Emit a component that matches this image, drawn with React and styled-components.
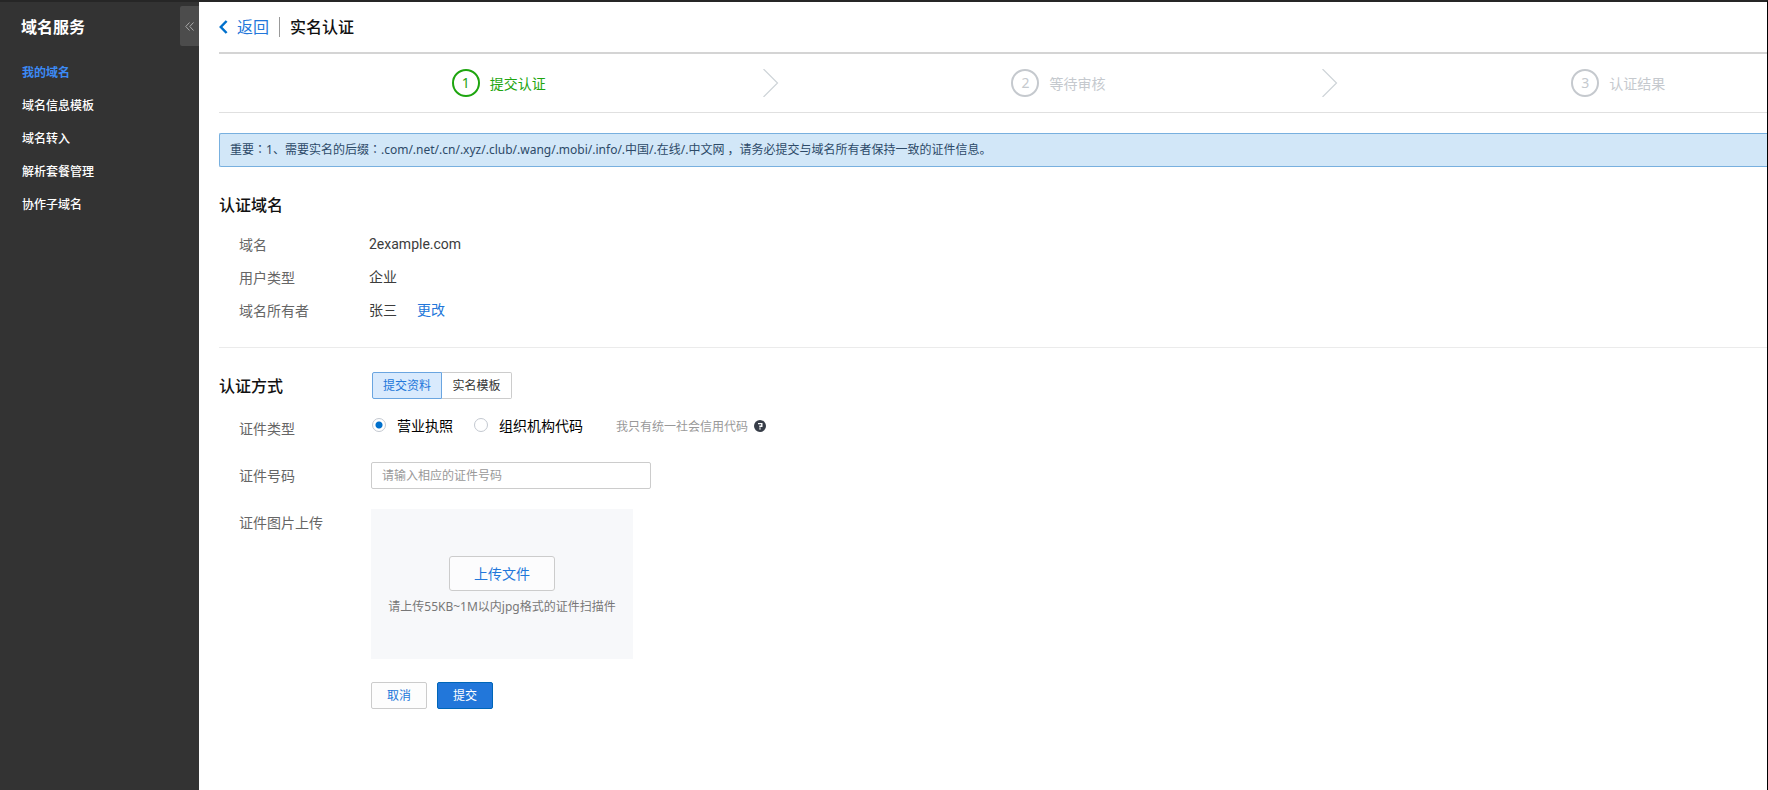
import React, { useState } from "react";
import styled, { createGlobalStyle, css } from "styled-components";

const menu = ["我的域名", "域名信息模板", "域名转入", "解析套餐管理", "协作子域名"];
const steps = ["提交认证", "等待审核", "认证结果"];
const modes = ["提交资料", "实名模板"];
const certTypes = ["营业执照", "组织机构代码"];

function App() {
  const [mode, setMode] = useState(modes[0]);
  const [certType, setCertType] = useState(certTypes[0]);

  return (
    <>
      <GlobalStyle />
      <Page>
        <Sidebar>
          <SidebarHead>
            <SidebarTitle>域名服务</SidebarTitle>
            <Collapse type="button" aria-label="收起">
              <svg width="9" height="9" viewBox="0 0 9 9">
                <path d="M4.5 0.5L0.8 4.5L4.5 8.5M8.5 0.5L4.8 4.5L8.5 8.5" />
              </svg>
            </Collapse>
          </SidebarHead>
          <nav>
            {menu.map((item, i) => (
              <MenuLink href="#" key={item} $active={i === 0}>
                {item}
              </MenuLink>
            ))}
          </nav>
        </Sidebar>

        <Main>
          <Header>
            <Back href="#">
              <svg width="9" height="14" viewBox="0 0 9 14">
                <path d="M7.6 1L1.8 7L7.6 13" />
              </svg>
              返回
            </Back>
            <PageTitle>实名认证</PageTitle>
          </Header>

          <Steps>
            {steps.map((step, i) => (
              <Step key={step} $active={i === 0}>
                <StepNumber>{i + 1}</StepNumber>
                {step}
                {i < steps.length - 1 && (
                  <StepArrow width="16" height="28" viewBox="0 0 16 28">
                    <path d="M0.5 0L14.5 14L0.5 28" />
                  </StepArrow>
                )}
              </Step>
            ))}
          </Steps>

          <Notice>
            重要<Mark>：</Mark>1、需要实名的后缀<Mark>：</Mark>
            .com/.net/.cn/.xyz/.club/.wang/.mobi/.info/.中国/.在线/.中文网
            ，请务必提交与域名所有者保持一致的证件信息。
          </Notice>

          <Section>
            <SectionTitle>认证域名</SectionTitle>
            <Details>
              <dt>域名</dt>
              <dd>2example.com</dd>
              <dt>用户类型</dt>
              <dd>企业</dd>
              <dt>域名所有者</dt>
              <dd>
                张三
                <TextLink href="#">更改</TextLink>
              </dd>
            </Details>
          </Section>

          <Form onSubmit={(e) => e.preventDefault()}>
            <FormHead>
              <SectionTitle>认证方式</SectionTitle>
              <Toggle>
                {modes.map((item) => (
                  <ToggleButton
                    type="button"
                    key={item}
                    $active={mode === item}
                    onClick={() => setMode(item)}
                  >
                    {item}
                  </ToggleButton>
                ))}
              </Toggle>
            </FormHead>

            <FormRow>
              <FormLabel as="span" id="certType">
                证件类型
              </FormLabel>
              <Radios role="radiogroup" aria-labelledby="certType">
                {certTypes.map((item) => (
                  <RadioLabel key={item}>
                    <Radio
                      type="radio"
                      name="certType"
                      checked={certType === item}
                      onChange={() => setCertType(item)}
                    />
                    {item}
                  </RadioLabel>
                ))}
                <Tip>
                  我只有统一社会信用代码
                  <svg width="12" height="12" viewBox="0 0 12 12">
                    <circle cx="6" cy="6" r="6" fill="#373d48" />
                    <path
                      d="M4 3.6H7.8V6.2H6V7.6M6 8.3V9.6"
                      fill="none"
                      stroke="#fff"
                      strokeWidth="1.4"
                    />
                  </svg>
                </Tip>
              </Radios>
            </FormRow>

            <FormRow>
              <FormLabel htmlFor="certNumber">证件号码</FormLabel>
              <TextInput id="certNumber" type="text" placeholder="请输入相应的证件号码" />
            </FormRow>

            <FormRow>
              <FormLabel as="span">证件图片上传</FormLabel>
              <UploadBox>
                <UploadButton type="button">上传文件</UploadButton>
                <UploadHint>请上传55KB~1M以内jpg格式的证件扫描件</UploadHint>
              </UploadBox>
            </FormRow>

            <Actions>
              <ActionButton type="button">取消</ActionButton>
              <ActionButton type="submit" $primary>
                提交
              </ActionButton>
            </Actions>
          </Form>
        </Main>
      </Page>
    </>
  );
}

export default App;

const GlobalStyle = createGlobalStyle`
  * {
    box-sizing: border-box;
  }
  body {
    margin: 0;
    background: #fff;
    color: #333;
    font-family: "Noto Sans", "Noto Sans CJK SC", sans-serif;
    font-size: 14px;
  }
  a {
    text-decoration: none;
  }
  button, input {
    font-family: inherit;
  }
  button {
    cursor: pointer;
    padding: 0;
  }
`;

const Page = styled.div`
  display: flex;
  min-height: 100vh;
  border-top: 2px solid #262626;
  border-right: 1px solid #000;
`;

const Sidebar = styled.aside`
  flex: 0 0 199px;
  background: #333;
`;

const SidebarHead = styled.div`
  display: flex;
  justify-content: space-between;
  align-items: flex-end;
  height: 44px;
  margin-bottom: 10px;
  padding-left: 21px;
`;

const SidebarTitle = styled.h1`
  margin: 0;
  color: #fff;
  font-size: 16px;
  line-height: 38px;
`;

const Collapse = styled.button`
  display: flex;
  align-items: center;
  justify-content: center;
  width: 19px;
  height: 40px;
  border: 0;
  border-radius: 2px 0 0 2px;
  background: #4c4c4c;

  path {
    fill: none;
    stroke: #aaa;
  }
`;

const MenuLink = styled.a`
  display: block;
  padding-left: 22px;
  color: ${(props) => (props.$active ? "#3c8af5" : "#fff")};
  font-size: 12px;
  font-weight: ${(props) => (props.$active ? 700 : 500)};
  line-height: 33px;
`;

const Main = styled.main`
  flex: 1;
  min-width: 0;
  padding-left: 20px;
  overflow: hidden;
`;

const Header = styled.header`
  display: flex;
  align-items: center;
  height: 52px;
  border-bottom: 2px solid #d4d4d4;
  font-size: 16px;
`;

const Back = styled.a`
  display: flex;
  align-items: center;
  gap: 9px;
  color: #2277da;
  line-height: 20px;

  path {
    fill: none;
    stroke: #0070cc;
    stroke-width: 2.5;
  }
`;

const PageTitle = styled.h2`
  margin: 0 0 0 10px;
  padding-left: 10px;
  border-left: 1px solid #999;
  color: #111;
  font-size: 16px;
  font-weight: 500;
  line-height: 20px;
`;

/* wider than the page, the last step runs past the edge */
const Steps = styled.div`
  display: grid;
  grid-template-columns: repeat(3, 1fr);
  width: calc(100% + 131px);
  height: 59px;
  border-bottom: 1px solid #e0e0e0;
`;

const Step = styled.div`
  position: relative;
  display: flex;
  align-items: center;
  justify-content: center;
  gap: 10px;
  color: ${(props) => (props.$active ? "#1ea50f" : "#c5c9ce")};
`;

const StepNumber = styled.span`
  width: 28px;
  height: 28px;
  border: 2px solid;
  border-radius: 50%;
  line-height: 24px;
  text-align: center;
`;

const StepArrow = styled.svg`
  position: absolute;
  right: 0;
  fill: none;
  stroke: #ced4d8;
  stroke-width: 1.2;
`;

const Notice = styled.p`
  margin: 20px 0 0;
  padding-left: 10px;
  border: 1px solid #78b0df;
  border-right: 0;
  border-radius: 2px 0 0 2px;
  background: #d2e7f8;
  color: #2d4a68;
  font-size: 12px;
  line-height: 32px;
`;

/* colon centred in its cell */
const Mark = styled.span`
  font-family: "Noto Sans CJK TC", sans-serif;
  line-height: 1;
`;

const Section = styled.section`
  padding: 26px 0 20px;
  border-bottom: 1px solid #ebebeb;
`;

const SectionTitle = styled.h3`
  margin: 0;
  color: #111;
  font-size: 16px;
  font-weight: 500;
  line-height: 24px;
`;

const Details = styled.dl`
  display: grid;
  grid-template-columns: 130px 1fr;
  margin: 11px 0 0;
  padding-left: 20px;
  line-height: 33px;

  dt {
    color: #666;
  }
  dd {
    margin: 0;
    color: #3c3c3c;
    font-family: Roboto, "Noto Sans CJK SC", sans-serif;
  }
`;

const TextLink = styled.a`
  margin-left: 20px;
  color: #2277da;
`;

const Form = styled.form`
  display: flex;
  flex-direction: column;
  padding: 24px 0;
`;

const FormHead = styled.div`
  display: grid;
  grid-template-columns: 153px 1fr;
  align-items: center;
  height: 27px;
  margin-bottom: 16px;
`;

const Toggle = styled.div`
  display: flex;
`;

const ToggleButton = styled.button`
  width: 70px;
  height: 27px;
  padding-bottom: 2px;
  border: 1px solid #ccc;
  border-radius: 0 2px 2px 0;
  background: #fff;
  color: #333;
  font-size: 12px;

  & + & {
    border-left: 0;
  }

  ${(props) =>
    props.$active &&
    css`
      border-color: #6aa5e0;
      border-radius: 2px 0 0 2px;
      background: #d9eafd;
      color: #2277da;
    `}
`;

const FormRow = styled.div`
  display: grid;
  grid-template-columns: 132px 1fr;
  align-items: start;
  padding-left: 20px;
  margin-bottom: 20px;
`;

const FormLabel = styled.label`
  color: #666;
  line-height: 27px;
`;

const Radios = styled.div`
  display: flex;
  align-items: center;
  gap: 21px;
  height: 20px;
  padding-left: 1px;
`;

const RadioLabel = styled.label`
  display: flex;
  align-items: center;
  gap: 11px;
  color: #000;
`;

const Radio = styled.input`
  appearance: none;
  width: 14px;
  height: 14px;
  margin: 0;
  border: 1px solid #c3c8d0;
  border-radius: 50%;
  background: #fff;

  &:checked {
    background: radial-gradient(circle, #0070cc 3px, #fff 4px);
  }
`;

const Tip = styled.span`
  display: flex;
  align-items: center;
  gap: 6px;
  margin-left: 12px;
  padding-top: 2px;
  color: #999;
  font-size: 12px;
`;

const TextInput = styled.input`
  width: 280px;
  height: 27px;
  padding: 0 10px;
  border: 1px solid #ccc;
  border-radius: 2px;
  color: #333;
  font-size: 12px;

  &::placeholder {
    color: #999;
  }
`;

const UploadBox = styled.div`
  display: flex;
  flex-direction: column;
  align-items: center;
  justify-content: center;
  gap: 6px;
  width: 262px;
  height: 150px;
  padding-top: 4px;
  background: #f7f8fa;
`;

const UploadButton = styled.button`
  width: 106px;
  height: 35px;
  border: 1px solid #ccc;
  border-radius: 3px;
  background: #fcfcfd;
  color: #2277da;
  font-size: 14px;
`;

const UploadHint = styled.span`
  color: #777;
  font-size: 12px;
  line-height: 20px;
  white-space: nowrap;
`;

const Actions = styled.div`
  display: flex;
  gap: 10px;
  padding: 3px 0 0 152px;
`;

const ActionButton = styled.button`
  width: 56px;
  height: 27px;
  padding-bottom: 2px;
  border: 1px solid ${(props) => (props.$primary ? "#0066b8" : "#ccc")};
  border-radius: 2px;
  background: ${(props) => (props.$primary ? "#2277da" : "#fdfdfd")};
  color: ${(props) => (props.$primary ? "#fff" : "#2277da")};
  font-size: 12px;
`;
